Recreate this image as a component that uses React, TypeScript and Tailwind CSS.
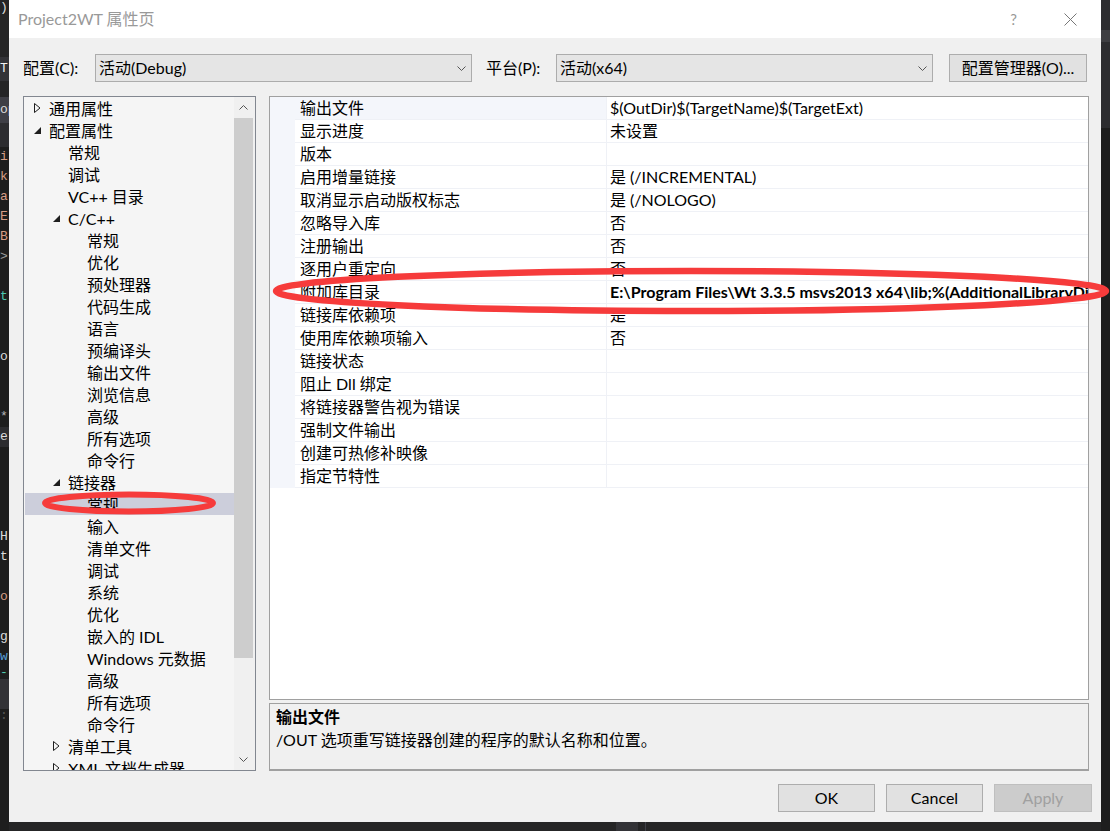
import React from "react"

// left edge: bits of the code editor behind the dialog
const EDITOR_LINES: { h: number; bg?: string; t?: string; c?: string }[] = [
  { h: 16, bg: "#252526", t: ")", c: "#dcdcdc" },
  { h: 41, bg: "#252526" },
  { h: 24, bg: "#333337", t: "T.", c: "#f1f1f1" },
  { h: 16, bg: "#252526" },
  { h: 26, bg: "#3f3f46", t: "op", c: "#dcdcdc" },
  { h: 24, bg: "#2d2d30" },
  { h: 20, t: "i", c: "#d69d85" },
  { h: 20, t: "k", c: "#d69d85" },
  { h: 20, t: "a", c: "#d69d85" },
  { h: 20, t: "E", c: "#d69d85" },
  { h: 20, t: "B", c: "#d69d85" },
  { h: 20, t: ">", c: "#9b9b9b" },
  { h: 20 },
  { h: 20, t: "t", c: "#4ec9b0" },
  { h: 20 },
  { h: 20 },
  { h: 20, t: "o", c: "#dcdcdc" },
  { h: 20 },
  { h: 20 },
  { h: 20, t: "*", c: "#b4b4b4" },
  { h: 20, bg: "#2d2d30", t: "e", c: "#dcdcdc" },
  { h: 20 },
  { h: 20 },
  { h: 20 },
  { h: 20 },
  { h: 20, t: "H", c: "#dcdcdc" },
  { h: 20, t: "t", c: "#dcdcdc" },
  { h: 20 },
  { h: 20, t: "o", c: "#d69d85" },
  { h: 20 },
  { h: 20, t: "g", c: "#dcdcdc" },
  { h: 20, t: "w", c: "#569cd6" },
  { h: 12, t: "-", c: "#4ec9b0" },
  { h: 30, bg: "#333337" },
  { h: 14, t: ":", c: "#555" },
]

type TreeItem = { label: string; level: number; state?: "open" | "closed"; selected?: boolean }

const TREE: TreeItem[] = [
  { label: "通用属性", level: 0, state: "closed" },
  { label: "配置属性", level: 0, state: "open" },
  { label: "常规", level: 1 },
  { label: "调试", level: 1 },
  { label: "VC++ 目录", level: 1 },
  { label: "C/C++", level: 1, state: "open" },
  { label: "常规", level: 2 },
  { label: "优化", level: 2 },
  { label: "预处理器", level: 2 },
  { label: "代码生成", level: 2 },
  { label: "语言", level: 2 },
  { label: "预编译头", level: 2 },
  { label: "输出文件", level: 2 },
  { label: "浏览信息", level: 2 },
  { label: "高级", level: 2 },
  { label: "所有选项", level: 2 },
  { label: "命令行", level: 2 },
  { label: "链接器", level: 1, state: "open" },
  { label: "常规", level: 2, selected: true },
  { label: "输入", level: 2 },
  { label: "清单文件", level: 2 },
  { label: "调试", level: 2 },
  { label: "系统", level: 2 },
  { label: "优化", level: 2 },
  { label: "嵌入的 IDL", level: 2 },
  { label: "Windows 元数据", level: 2 },
  { label: "高级", level: 2 },
  { label: "所有选项", level: 2 },
  { label: "命令行", level: 2 },
  { label: "清单工具", level: 1, state: "closed" },
  { label: "XML 文档生成器", level: 1, state: "closed" },
]

const PROPS: { name: string; value: string; bold?: boolean }[] = [
  { name: "输出文件", value: "$(OutDir)$(TargetName)$(TargetExt)" },
  { name: "显示进度", value: "未设置" },
  { name: "版本", value: "" },
  { name: "启用增量链接", value: "是 (/INCREMENTAL)" },
  { name: "取消显示启动版权标志", value: "是 (/NOLOGO)" },
  { name: "忽略导入库", value: "否" },
  { name: "注册输出", value: "否" },
  { name: "逐用户重定向", value: "否" },
  { name: "附加库目录", value: "E:\\Program Files\\Wt 3.3.5 msvs2013 x64\\lib;%(AdditionalLibraryDirectories)", bold: true },
  { name: "链接库依赖项", value: "是" },
  { name: "使用库依赖项输入", value: "否" },
  { name: "链接状态", value: "" },
  { name: "阻止 Dll 绑定", value: "" },
  { name: "将链接器警告视为错误", value: "" },
  { name: "强制文件输出", value: "" },
  { name: "创建可热修补映像", value: "" },
  { name: "指定节特性", value: "" },
]

const Chevron = ({ up = false }: { up?: boolean }) => (
  <svg width="9" height="5" viewBox="0 0 9 5" className={up ? "rotate-180" : ""}>
    <path d="M0.5 0.5 L4.5 4.5 L8.5 0.5" fill="none" stroke="#555" strokeWidth="1" />
  </svg>
)

function Arrow({ state }: { state?: "open" | "closed" }) {
  if (state === "closed")
    return (
      <svg width="7" height="10" viewBox="0 0 7 10">
        <path d="M0.5 0.5 L6 5 L0.5 9.5 Z" fill="none" stroke="#1e1e1e" strokeWidth="1" />
      </svg>
    )
  if (state === "open")
    return (
      <svg width="7" height="7" viewBox="0 0 7 7">
        <path d="M7 0 L7 7 L0 7 Z" fill="#1e1e1e" />
      </svg>
    )
  return null
}

function Dropdown({ value, width }: { value: string; width: string }) {
  return (
    <div className={`${width} h-[28px] bg-[#e5e5e5] border border-[#acacac] flex items-center justify-between pl-[3px] pr-[5px]`}>
      <span>{value}</span>
      <Chevron />
    </div>
  )
}

function Button({ children, disabled = false }: { children: React.ReactNode; disabled?: boolean }) {
  return (
    <div
      className={
        disabled
          ? "w-[98px] h-[28px] bg-[#cccccc] border border-[#bfbfbf] text-[#a0a0a0] flex items-center justify-center"
          : "w-[97px] h-[28px] bg-[#e1e1e1] border border-[#adadad] flex items-center justify-center"
      }
    >
      {children}
    </div>
  )
}

export default function App() {
  return (
    <div className="relative w-[1110px] h-[831px] overflow-hidden flex bg-[#1e1e1e] font-['Lato','Noto_Sans_CJK_SC',sans-serif] text-[16px] text-black">
      {/* editor strip behind the dialog */}
      <div className="w-[9px] shrink-0 flex flex-col overflow-hidden font-['Liberation_Mono',monospace] text-[13px]">
        {EDITOR_LINES.map((l, i) => (
          <div
            key={i}
            className="shrink-0 flex items-center whitespace-nowrap"
            style={{ height: l.h, background: l.bg, color: l.c }}
          >
            {l.t}
          </div>
        ))}
      </div>

      <div className="w-[1092px] shrink-0 flex flex-col">
        {/* dialog */}
        <div className="h-[822px] bg-[#f0f0f0] flex flex-col">
          <div className="h-[38px] bg-white flex items-center justify-between pl-[9px] pr-[24px]">
            <span className="text-[#999999]">Project2WT 属性页</span>
            <div className="flex items-center gap-[47px]">
              <span className="text-[#999999] text-[15px]">?</span>
              <svg width="13" height="13" viewBox="0 0 13 13">
                <path d="M0.5 0.5 L12.5 12.5 M12.5 0.5 L0.5 12.5" stroke="#777" strokeWidth="1" />
              </svg>
            </div>
          </div>

          <div className="mt-[16px] h-[28px] flex items-center pl-[14px]">
            <span className="w-[72px]">配置(C):</span>
            <Dropdown value="活动(Debug)" width="w-[377px]" />
            <span className="ml-[14px] w-[70px]">平台(P):</span>
            <Dropdown value="活动(x64)" width="w-[377px]" />
            <div className="ml-[16px] w-[138px] h-[28px] bg-[#e1e1e1] border border-[#adadad] flex items-center justify-center">
              配置管理器(O)...
            </div>
          </div>

          <div className="mt-[14px] flex pl-[14px]">
            {/* tree */}
            <div className="w-[233px] h-[675px] border border-[#828790] bg-[#f5f5f5] flex overflow-hidden">
              <div className="flex-1 flex flex-col overflow-hidden">
                {TREE.map((t, i) => (
                  <div
                    key={i}
                    className={`h-[22px] shrink-0 flex items-center whitespace-nowrap ml-px ${t.selected ? "bg-[#cccedb]" : ""}`}
                    style={{ paddingLeft: 9 + t.level * 19 }}
                  >
                    <span className="w-[15px] flex items-center">
                      <Arrow state={t.state} />
                    </span>
                    <span className="leading-[21px]">{t.label}</span>
                  </div>
                ))}
              </div>
              <div className="w-[21px] bg-[#f0f0f0] flex flex-col pr-[2px]">
                <div className="h-[21px] flex items-center justify-center">
                  <Chevron up />
                </div>
                <div className="h-[540px] bg-[#cdcdcd]" />
                <div className="flex-1 flex items-end justify-center pb-[8px]">
                  <Chevron />
                </div>
              </div>
            </div>

            {/* property grid + description */}
            <div className="ml-[13px] w-[820px] flex flex-col">
              <div className="h-[604px] border border-[#a0a0a0] bg-white flex flex-col overflow-hidden">
                {PROPS.map((p, i) => (
                  <div key={i} className="h-[23px] shrink-0 flex">
                    <div className="w-[25px] bg-[#f4f6fb]" />
                    <div className="flex-1 flex border-b border-[#eff1f6] min-w-0">
                      <div className={`w-[312px] shrink-0 pl-[5px] border-r border-[#eff1f6] leading-[21px] ${i === 0 ? "bg-[#f4f6fb]" : ""}`}>
                        {p.name}
                      </div>
                      <div className={`flex-1 min-w-0 pl-[3px] leading-[21px] whitespace-nowrap overflow-hidden ${p.bold ? "font-bold" : ""}`}>
                        {p.value}
                      </div>
                    </div>
                  </div>
                ))}
              </div>
              <div className="mt-[3px] h-[68px] border border-[#a0a0a0] border-b-2 bg-[#f0f0f0] px-[6px] pt-[2px] flex flex-col">
                <span className="font-bold leading-[22px]">输出文件</span>
                <span className="leading-[23px]">/OUT 选项重写链接器创建的程序的默认名称和位置。</span>
              </div>
            </div>
          </div>

          <div className="mt-[13px] flex justify-end gap-[11px] pr-[9px]">
            <Button>OK</Button>
            <Button>Cancel</Button>
            <Button disabled>Apply</Button>
          </div>
        </div>
        <div className="h-[9px] bg-[#252526] flex">
          <div className="ml-[607px] w-[22px] bg-[#333337]" />
          <div className="ml-[7px] w-px bg-[#3f3f46]" />
        </div>
      </div>

      {/* editor strip on the right */}
      <div className="w-[9px] shrink-0 flex flex-col">
        <div className="h-[30px] bg-[#2d2d30]" />
        <div className="h-[12px] bg-[#3e3e42]" />
        <div className="h-[86px] bg-[#2d2d30]" />
        <div className="flex-1 bg-[#1e1e1e]" />
      </div>

      {/* red annotation marks */}
      <svg className="absolute left-0 top-0 pointer-events-none" width="1110" height="831">
        <ellipse cx="691" cy="291" rx="415" ry="20" fill="none" stroke="#f63b3b" strokeWidth="6.5" />
        <ellipse cx="129" cy="503" rx="84" ry="8.5" fill="none" stroke="#f63b3b" strokeWidth="6" />
      </svg>
    </div>
  )
}
